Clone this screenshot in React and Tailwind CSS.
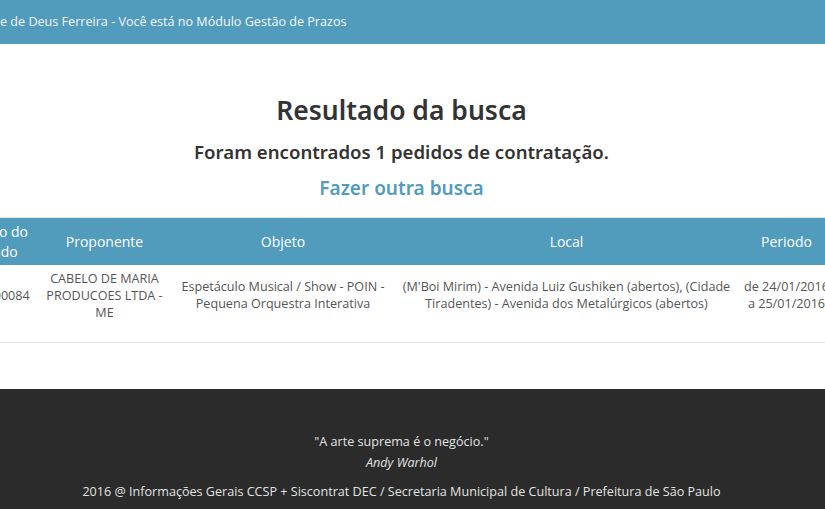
import React from 'react';

const columns = ['Código do Pedido', 'Proponente', 'Objeto', 'Local', 'Periodo'];

const pedidos = [
  {
    codigo: '2016/00084',
    proponente: 'CABELO DE MARIA PRODUCOES LTDA - ME',
    objeto: 'Espetáculo Musical / Show - POIN - Pequena Orquestra Interativa',
    local: "(M'Boi Mirim) - Avenida Luiz Gushiken (abertos), (Cidade Tiradentes) - Avenida dos Metalúrgicos (abertos)",
    inicio: '24/01/2016',
    fim: '25/01/2016',
  },
];

export default function App() {
  return (
    <div className="w-[825px] h-[509px] overflow-hidden bg-white font-['Open_Sans',sans-serif]">
      {/* Barra superior */}
      <header className="h-[44px] bg-[#519bbd] flex items-center text-[#f4f8fb] text-[12.6px] whitespace-nowrap">
        <p>e de Deus Ferreira - Você está no Módulo Gestão de Prazos</p>
      </header>

      {/* Titulos */}
      <section className="pt-[50px] pr-[22px] text-center font-['Noto_Sans',sans-serif]">
        <h1 className="text-[26.5px] leading-[32px] font-semibold text-[#333]">Resultado da busca</h1>
        <h2 className="mt-[14px] text-[18.6px] leading-[24px] font-semibold text-[#333]">
          Foram encontrados 1 pedidos de contratação.
        </h2>
        <a href="#" className="block mt-[12px] text-[19px] leading-[24px] font-semibold text-[#519bbd]">
          Fazer outra busca
        </a>
      </section>

      {/* Tabela de resultados */}
      <div className="mt-[17px] -ml-[47px] w-[885px] border-t border-[#e3e3de]">
        <div className="grid grid-cols-[84px_135px_222px_345px_95px] h-[47px] bg-[#519bbd] text-white text-[14px] leading-[20px]">
          {columns.map((c) => (
            <div key={c} className="flex items-center justify-center text-center px-[8px]">
              {c}
            </div>
          ))}
        </div>
        {pedidos.map((p) => (
          <div
            key={p.codigo}
            className="grid grid-cols-[84px_135px_222px_345px_95px] h-[78px] border-b border-[#e3e3de] text-[#555] text-[12.6px] leading-[17px]"
          >
            <div className="flex items-center justify-center text-center px-[6px] pb-[17px]">{p.codigo}</div>
            <div className="flex items-center justify-center text-center px-[8px] pb-[17px]">{p.proponente}</div>
            <div className="flex items-center justify-center text-center px-[7px] pb-[17px]">{p.objeto}</div>
            <div className="flex items-center justify-center text-center px-[6px] pb-[17px]">{p.local}</div>
            <div className="flex flex-col items-center justify-center text-center px-[4px] pb-[17px] whitespace-nowrap">
              <span>de {p.inicio}</span>
              <span>a {p.fim}</span>
            </div>
          </div>
        ))}
      </div>

      {/* Rodapé */}
      <footer className="mt-[46px] h-[140px] bg-[#2b2b2b] pt-[42px] pr-[22px] text-center text-[#e2e2e2] text-[12.6px] leading-[21px]">
        <p>"A arte suprema é o negócio."</p>
        <p className="italic">Andy Warhol</p>
        <p className="mt-[8px]">
          2016 @ Informações Gerais CCSP + Siscontrat DEC / Secretaria Municipal de Cultura / Prefeitura de São Paulo
        </p>
      </footer>
    </div>
  );
}
